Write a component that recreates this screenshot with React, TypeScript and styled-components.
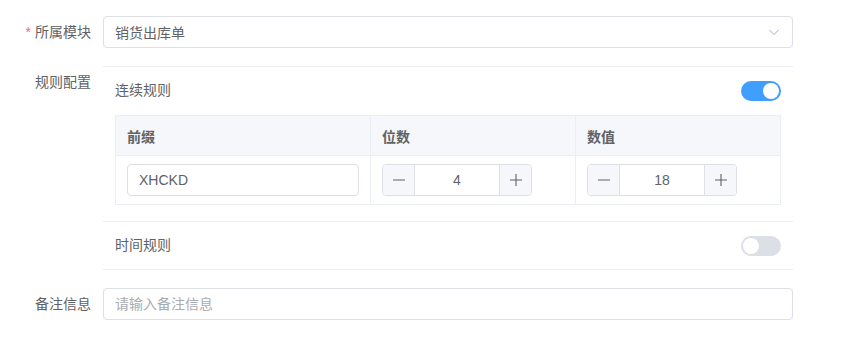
import React, { useState } from 'react';
import styled, { createGlobalStyle } from 'styled-components';

const GlobalStyle = createGlobalStyle`
  body {
    margin: 0;
    background: #fff;
    font-family: "Liberation Sans", "Noto Sans CJK SC", sans-serif;
    font-size: 14px;
    color: #606266;
  }
`;

const Form = styled.div`
  width: 793px;
  padding-top: 16px;
`;

const FormItem = styled.div`
  display: flex;
  margin-bottom: 18px;
`;

const Label = styled.label<{ required?: boolean }>`
  width: 103px;
  box-sizing: border-box;
  padding-right: 12px;
  text-align: right;
  line-height: 32px;
  height: 32px;
  color: #606266;
  flex-shrink: 0;
  &::before {
    content: ${p => (p.required ? '"*"' : 'none')};
    color: #f56c6c;
    margin-right: 4px;
  }
`;

const Content = styled.div`
  flex: 1;
  min-width: 0;
`;

const InputBox = styled.div`
  position: relative;
  height: 32px;
  box-sizing: border-box;
  border: 1px solid #dcdfe6;
  border-radius: 4px;
  display: flex;
  align-items: center;
  padding: 0 11px;
  background: #fff;
`;

const TextInput = styled.input`
  border: none;
  outline: none;
  flex: 1;
  min-width: 0;
  height: 30px;
  padding: 0;
  font: inherit;
  color: #606266;
  background: transparent;
  &::placeholder {
    color: #a8abb2;
  }
`;

const Arrow = styled.svg`
  width: 14px;
  height: 14px;
  color: #a8abb2;
  flex-shrink: 0;
`;

const Section = styled.div<{ bottomLine?: boolean }>`
  border-top: 1px solid #ebeef5;
  border-bottom: ${p => (p.bottomLine ? '1px solid #ebeef5' : 'none')};
`;

const SectionHead = styled.div<{ h: number }>`
  height: ${p => p.h}px;
  display: flex;
  align-items: center;
  justify-content: space-between;
  padding: 0 12px;
`;

const SectionTitle = styled.span`
  line-height: 20px;
  margin-top: -2px;
`;

const SectionBody = styled.div`
  padding: 0 12px 16px;
`;

const SwitchTrack = styled.button<{ on: boolean }>`
  position: relative;
  width: 40px;
  height: 20px;
  border-radius: 10px;
  border: none;
  padding: 0;
  cursor: pointer;
  background: ${p => (p.on ? '#409eff' : '#dcdfe6')};
  &::after {
    content: "";
    position: absolute;
    top: 2px;
    left: ${p => (p.on ? '22px' : '2px')};
    width: 16px;
    height: 16px;
    border-radius: 50%;
    background: #fff;
  }
`;

const Table = styled.div`
  border: 1px solid #ebeef5;
  display: grid;
  grid-template-columns: 255px 205px 1fr;
`;

const HeadCell = styled.div<{ last?: boolean }>`
  height: 39px;
  background: #f5f7fa;
  border-bottom: 1px solid #ebeef5;
  border-right: ${p => (p.last ? 'none' : '1px solid #ebeef5')};
  padding: 0 11px;
  display: flex;
  align-items: center;
  font-weight: bold;
  color: #606266;
`;

const BodyCell = styled.div<{ last?: boolean }>`
  height: 48px;
  box-sizing: border-box;
  padding: 8px 11px;
  border-right: ${p => (p.last ? 'none' : '1px solid #ebeef5')};
`;

const Stepper = styled.div`
  width: 150px;
  height: 32px;
  box-sizing: border-box;
  border: 1px solid #dcdfe6;
  border-radius: 4px;
  display: flex;
  overflow: hidden;
`;

const StepButton = styled.button<{ side: 'left' | 'right' }>`
  width: 32px;
  height: 30px;
  padding: 0;
  border: none;
  ${p => (p.side === 'left' ? 'border-right' : 'border-left')}: 1px solid #dcdfe6;
  background: #f5f7fa;
  color: #606266;
  display: flex;
  align-items: center;
  justify-content: center;
  cursor: pointer;
  svg {
    width: 14px;
    height: 14px;
  }
`;

const StepValue = styled.div`
  flex: 1;
  text-align: center;
  line-height: 30px;
  color: #606266;
`;

function NumberInput({ value }: { value: number }) {
  return (
    <Stepper>
      <StepButton side="left">
        <svg viewBox="0 0 14 14"><path d="M1 7h12" stroke="currentColor" strokeWidth="1.1" /></svg>
      </StepButton>
      <StepValue>{value}</StepValue>
      <StepButton side="right">
        <svg viewBox="0 0 14 14"><path d="M1 7h12M7 1v12" stroke="currentColor" strokeWidth="1.1" /></svg>
      </StepButton>
    </Stepper>
  );
}

export default function App() {
  const [serial, setSerial] = useState(true);
  const [timed, setTimed] = useState(false);

  return (
    <>
      <GlobalStyle />
      <Form>
        <FormItem>
          <Label required>所属模块</Label>
          <Content>
            <InputBox>
              <TextInput readOnly value="销货出库单" />
              <Arrow viewBox="0 0 14 14" fill="none">
                <path d="M2.5 5l4.5 4.5L11.5 5" stroke="currentColor" strokeWidth="1" />
              </Arrow>
            </InputBox>
          </Content>
        </FormItem>

        <FormItem>
          <Label>规则配置</Label>
          <Content>
            <Section>
              <SectionHead h={48}>
                <SectionTitle>连续规则</SectionTitle>
                <SwitchTrack on={serial} onClick={() => setSerial(!serial)} />
              </SectionHead>
              <SectionBody>
                <Table>
                  <HeadCell>前缀</HeadCell>
                  <HeadCell>位数</HeadCell>
                  <HeadCell last>数值</HeadCell>
                  <BodyCell>
                    <InputBox>
                      <TextInput defaultValue="XHCKD" />
                    </InputBox>
                  </BodyCell>
                  <BodyCell>
                    <NumberInput value={4} />
                  </BodyCell>
                  <BodyCell last>
                    <NumberInput value={18} />
                  </BodyCell>
                </Table>
              </SectionBody>
            </Section>
            <Section bottomLine>
              <SectionHead h={47}>
                <SectionTitle>时间规则</SectionTitle>
                <SwitchTrack on={timed} onClick={() => setTimed(!timed)} />
              </SectionHead>
            </Section>
          </Content>
        </FormItem>

        <FormItem>
          <Label>备注信息</Label>
          <Content>
            <InputBox>
              <TextInput placeholder="请输入备注信息" />
            </InputBox>
          </Content>
        </FormItem>
      </Form>
    </>
  );
}
